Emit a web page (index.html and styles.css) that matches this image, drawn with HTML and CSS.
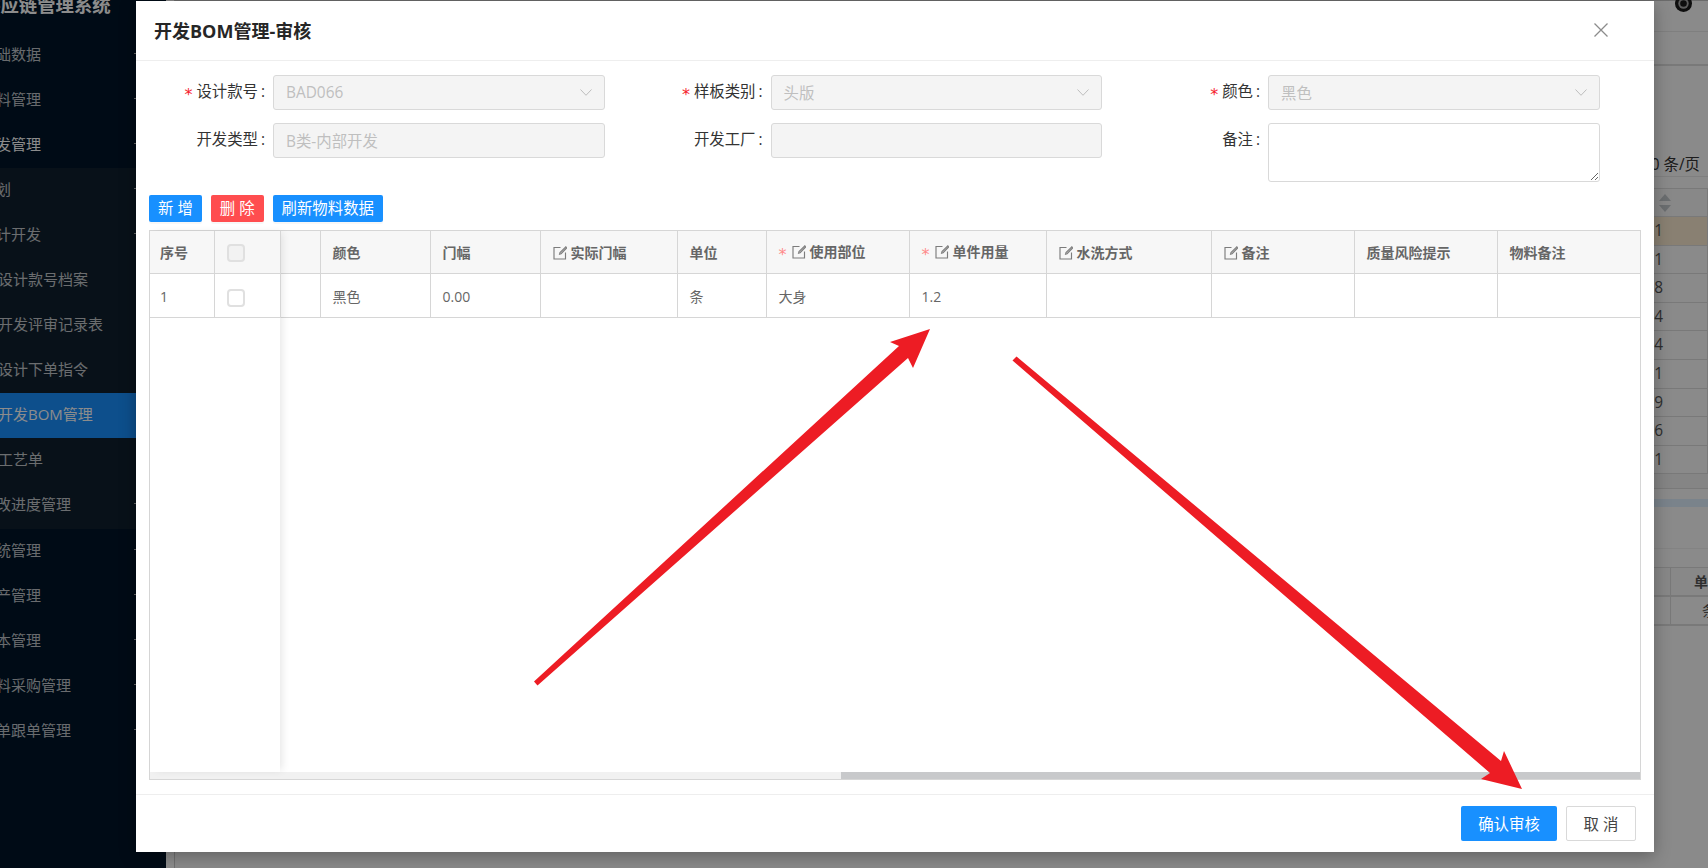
FILE: index.html
```html
<!DOCTYPE html>
<html>
<head>
    <meta charset="utf-8">
    <title>开发BOM管理-审核</title>
    <link rel="stylesheet" href="styles.css">
</head>
<body>
    <svg class="icon-defs" width="0" height="0">
        <symbol id="edit" viewBox="0 0 14 14">
            <path d="M7.5 1.500H1v11.500h11.500V6.500M12.800.8L7 6.600l-.4 1.500 1.500-.4L13.600 2z" fill="none" stroke="#7c7c7c" stroke-width="1.150"/>
        </symbol>
        <symbol id="chevron" viewBox="0 0 12 7">
            <path d="M.5.5L6 6.300 11.500.5" stroke="#bdbdbd" fill="none"/>
        </symbol>
    </svg>

    <div class="page">
        <aside class="sidebar">
            <div class="logo">供应链管理系统</div>
            <div class="menu-item"><span class="lv1">基础数据</span><i class="caret"></i></div>
            <div class="menu-item"><span class="lv1">物料管理</span><i class="caret"></i></div>
            <div class="menu-item open"><span class="lv1">开发管理</span><i class="caret"></i></div>
            <div class="submenu">
                <div class="menu-item"><span class="lv1">企划</span><i class="caret"></i></div>
                <div class="menu-item"><span class="lv1">设计开发</span><i class="caret"></i></div>
                <div class="menu-item"><span class="lv2">设计款号档案</span></div>
                <div class="menu-item"><span class="lv2">开发评审记录表</span></div>
                <div class="menu-item"><span class="lv2">设计下单指令</span></div>
                <div class="menu-item active"><span class="lv2">开发BOM管理</span></div>
                <div class="menu-item"><span class="lv2">工艺单</span></div>
                <div class="menu-item"><span class="lv1">修改进度管理</span><i class="caret"></i></div>
            </div>
            <div class="menu-item"><span class="lv1">系统管理</span><i class="caret"></i></div>
            <div class="menu-item"><span class="lv1">生产管理</span><i class="caret"></i></div>
            <div class="menu-item"><span class="lv1">成本管理</span><i class="caret"></i></div>
            <div class="menu-item"><span class="lv1">面料采购管理</span><i class="caret"></i></div>
            <div class="menu-item"><span class="lv1">订单跟单管理</span><i class="caret"></i></div>
        </aside>
        <main class="main">
            <div class="topbar">
                <svg class="user-icon" width="17" height="17" viewBox="0 0 18 18">
                    <circle cx="9" cy="9" r="9" fill="#1a1a1a"/>
                    <circle cx="9" cy="9" r="5.500" fill="#aaa"/>
                    <circle cx="9" cy="9" r="3.500" fill="#1a1a1a"/>
                </svg>
            </div>
            <div class="tabs"></div>
            <div class="pager">10 条/页</div>
            <div class="list">
                <div class="list-head"><span class="sort"><i class="up"></i><i class="down"></i></span></div>
                <div class="list-row current">2101</div>
                <div class="list-row">2101</div>
                <div class="list-row">2108</div>
                <div class="list-row">2104</div>
                <div class="list-row">2104</div>
                <div class="list-row">2101</div>
                <div class="list-row">2119</div>
                <div class="list-row">2106</div>
                <div class="list-row">2101</div>
            </div>
            <div class="list-foot"></div>
            <div class="blue-band"></div>
            <div class="sub-title"></div>
            <div class="sub-table">
                <div class="sub-row sub-head"><span>单位</span></div>
                <div class="sub-row"><span>条</span></div>
            </div>
        </main>
    </div>

    <div class="mask"></div>

    <div class="modal">
        <div class="modal-header">
            <span class="modal-title">开发BOM管理-审核</span>
            <svg class="modal-close" width="14" height="14" viewBox="0 0 14 14">
                <path d="M.5.5l13 13M13.500.5l-13 13" stroke="#8c8c8c" stroke-width="1.300" fill="none"/>
            </svg>
        </div>

        <div class="modal-body">
            <form class="form-grid">
                <div class="form-item">
                    <label class="form-label"><em>*</em>设计款号</label>
                    <div class="select-box">BAD066 <svg width="12" height="7"><use href="#chevron"/></svg></div>
                </div>
                <div class="form-item">
                    <label class="form-label"><em>*</em>样板类别</label>
                    <div class="select-box">头版 <svg width="12" height="7"><use href="#chevron"/></svg></div>
                </div>
                <div class="form-item">
                    <label class="form-label"><em>*</em>颜色</label>
                    <div class="select-box">黑色 <svg width="12" height="7"><use href="#chevron"/></svg></div>
                </div>
                <div class="form-item">
                    <label class="form-label">开发类型</label>
                    <div class="select-box">B类-内部开发</div>
                </div>
                <div class="form-item">
                    <label class="form-label">开发工厂</label>
                    <div class="select-box"></div>
                </div>
                <div class="form-item">
                    <label class="form-label">备注</label>
                    <textarea class="note-input"></textarea>
                </div>
            </form>

            <div class="toolbar">
                <button type="button" class="btn btn-primary">新 增</button>
                <button type="button" class="btn btn-danger">删 除</button>
                <button type="button" class="btn btn-primary">刷新物料数据</button>
            </div>

            <div class="table-wrap">
                <div class="table-body">
                    <table class="data-table">
                        <colgroup>
                            <col class="w-blank"><col class="w-110"><col class="w-110"><col class="w-137"><col class="w-89">
                            <col class="w-143"><col class="w-137"><col class="w-165"><col class="w-143"><col class="w-143"><col class="w-143">
                        </colgroup>
                        <thead>
                            <tr>
                                <th></th>
                                <th>颜色</th>
                                <th>门幅</th>
                                <th><svg class="edit-icon"><use href="#edit"/></svg>实际门幅</th>
                                <th>单位</th>
                                <th><em>*</em><svg class="edit-icon"><use href="#edit"/></svg>使用部位</th>
                                <th><em>*</em><svg class="edit-icon"><use href="#edit"/></svg>单件用量</th>
                                <th><svg class="edit-icon"><use href="#edit"/></svg>水洗方式</th>
                                <th><svg class="edit-icon"><use href="#edit"/></svg>备注</th>
                                <th>质量风险提示</th>
                                <th>物料备注</th>
                            </tr>
                        </thead>
                        <tbody>
                            <tr>
                                <td></td>
                                <td>黑色</td>
                                <td>0.00</td>
                                <td></td>
                                <td>条</td>
                                <td>大身</td>
                                <td>1.2</td>
                                <td></td>
                                <td></td>
                                <td></td>
                                <td></td>
                            </tr>
                        </tbody>
                    </table>
                    <div class="frozen">
                        <table class="data-table frozen-table">
                            <colgroup><col class="w-64"><col class="w-66"></colgroup>
                            <thead><tr><th>序号</th><th><span class="check head-check"></span></th></tr></thead>
                            <tbody><tr><td>1</td><td><span class="check"></span></td></tr></tbody>
                        </table>
                    </div>
                </div>
                <div class="scrollbar"><div class="scroll-thumb"></div></div>
            </div>
        </div>

        <div class="modal-footer">
            <button type="button" class="btn-large btn-primary">确认审核</button>
            <button type="button" class="btn-large btn-plain">取 消</button>
        </div>
    </div>

    <svg class="arrows" width="1708" height="868" viewBox="0 0 1708 868">
        <polygon points="534,681.5 899,346 890,342 930,329 913,368 908,358 537.5,685.500" fill="#ed1c24"/>
        <polygon points="1016.5,356.500 1501,761 1504,751 1522,789 1481,779 1490,773 1012.500,360.500" fill="#ed1c24"/>
    </svg>
</body>
</html>
```

FILE: styles.css
```css
* {
    box-sizing: border-box;
}

html, body {
    margin: 0;
    height: 100%;
    overflow: hidden;
}

body {
    font-family: "Open Sans", "Noto Sans CJK SC", sans-serif;
    font-size: 15.4px;
    color: #333;
}

.icon-defs {
    position: absolute;
}

.page {
    display: flex;
    height: 868px;
}

/* sidebar */
.sidebar {
    width: 166px;
    flex-shrink: 0;
    overflow: hidden;
    background-color: #001529;
    color: rgba(255, 255, 255, 0.75);
    font-size: 15px;
}

.logo {
    height: 32.5px;
    margin-left: -18px;
    font-size: 18.4px;
    font-weight: 700;
    line-height: 9px;
    white-space: nowrap;
    color: #fff;
}

.menu-item {
    display: flex;
    align-items: center;
    justify-content: space-between;
    height: 45.1px;
    padding: 0 30px 4px 0;
    white-space: nowrap;
}

.menu-item.open {
    color: #fff;
}

.menu-item.active {
    background-color: #1890ff;
    color: #fff;
}

.submenu {
    background-color: #0f1f2f;
}

.lv1 {
    margin-left: -19px;
}

.lv2 {
    margin-left: -2px;
}

.caret {
    width: 2px;
    height: 1px;
    background-color: #bbb;
}

/* page behind the dialog */
.main {
    flex: 1;
    min-width: 0;
    margin-left: 8px;
    border-left: 1px solid #ccc;
    border-top: 1px solid #c4c4c4;
    background-color: #fbfbfb;
}

.topbar {
    display: flex;
    justify-content: flex-end;
    height: 31px;
    padding-right: 16px;
    border-bottom: 1px solid #e8e8e8;
}

.user-icon {
    margin-top: -6px;
}

.tabs {
    height: 34px;
    border-bottom: 2px solid #ddd;
}

.pager {
    height: 111px;
    padding: 88px 8px 0 0;
    border-bottom: 1px solid #e8e8e8;
    text-align: right;
    line-height: 22px;
    white-space: nowrap;
}

.list {
    margin-top: 11px;
    border-top: 1px solid #ddd;
    border-right: 1px solid #ddd;
}

.list-head {
    display: flex;
    justify-content: flex-end;
    height: 28px;
    padding-right: 36px;
    background-color: #f7f7f7;
    border-bottom: 1px solid #ddd;
}

.sort {
    display: flex;
    flex-direction: column;
    gap: 4px;
    padding-top: 5px;
}

.sort i {
    width: 0;
    height: 0;
    border-left: 6px solid transparent;
    border-right: 6px solid transparent;
}

.sort .up {
    border-bottom: 7px solid #c4c8cc;
}

.sort .down {
    border-top: 7px solid #c4c8cc;
}

.list-row {
    height: 28.6px;
    padding-right: 44px;
    border-bottom: 1px solid #ddd;
    text-align: right;
    line-height: 27px;
    color: #555;
}

.list-row.current {
    background-color: #f9ead0;
}

.list-foot {
    height: 15px;
    background-color: #f2f2f2;
    border-bottom: 1px solid #ddd;
}

.blue-band {
    height: 8px;
    margin-top: 10px;
    background-color: #dfeefe;
}

.sub-title {
    height: 42px;
    border-bottom: 1px solid #eee;
}

.sub-table {
    margin-top: 18px;
    border-top: 1px solid #ddd;
}

.sub-row {
    height: 29px;
    padding-left: 1495px;
    border-bottom: 2px solid #ddd;
    font-size: 14px;
    line-height: 27px;
    white-space: nowrap;
    overflow: hidden;
    color: #555;
}

.sub-row span {
    display: block;
    padding-left: 23px;
    border-left: 1px solid #ddd;
}

.sub-head {
    font-weight: 700;
    background-color: #f7f7f7;
}

.sub-head + .sub-row span {
    padding-left: 31px;
}

/* overlay */
.mask {
    position: absolute;
    top: 0;
    left: 0;
    right: 0;
    bottom: 0;
    background-color: rgba(0, 0, 0, 0.45);
}

.arrows {
    position: absolute;
    top: 0;
    left: 0;
    pointer-events: none;
}

/* dialog */
.modal {
    position: absolute;
    top: 1px;
    left: 136px;
    display: flex;
    flex-direction: column;
    width: 1518px;
    height: 851px;
    background-color: #fff;
    box-shadow: 0 4px 16px rgba(0, 0, 0, 0.3);
}

.modal-header {
    display: flex;
    align-items: center;
    justify-content: space-between;
    height: 60px;
    padding: 0 46px 2px 18px;
    border-bottom: 1px solid #eee;
}

.modal-title {
    font-size: 18px;
    font-weight: 700;
    color: #262626;
}

.modal-body {
    flex: 1;
    padding: 14px 13px 0;
}

.form-grid {
    display: grid;
    grid-template-columns: repeat(3, 456.5px);
    column-gap: 41px;
    row-gap: 13px;
    margin-left: -1px;
}

.form-item {
    display: flex;
    align-items: flex-start;
}

.form-label {
    flex: 0 0 125px;
    height: 35px;
    padding-right: 8px;
    text-align: right;
    line-height: 34px;
    color: #333;
}

.form-label::after {
    content: ":";
    margin-left: 3px;
}

.form-label em,
.data-table th em {
    display: inline-block;
    height: 14px;
    font-family: "DejaVu Sans", sans-serif;
    font-size: 16px;
    font-style: normal;
    font-weight: 400;
    line-height: 14px;
    vertical-align: -3px;
}

.form-label em {
    margin-right: 4px;
    color: #f5222d;
}

.select-box {
    display: flex;
    flex: 1;
    align-items: center;
    justify-content: space-between;
    height: 35px;
    padding: 0 12px 1px;
    border: 1px solid #d9d9d9;
    border-radius: 3px;
    background-color: #f4f4f4;
    color: #bfbfbf;
}

.note-input {
    flex: 1;
    height: 59px;
    border: 1px solid #d9d9d9;
    border-radius: 3px;
    resize: vertical;
}

.toolbar {
    display: flex;
    gap: 9px;
    height: 27px;
    margin-top: 13px;
}

.btn {
    height: 27px;
    padding: 0 9px;
    border: 0;
    border-radius: 2px;
    font-family: inherit;
    font-size: 15.4px;
    line-height: 25px;
    color: #fff;
    box-shadow: 0 2px 0 rgba(0, 0, 0, 0.03);
}

.btn-primary {
    background-color: #1890ff;
    color: #fff;
}

.btn-danger {
    background-color: #ff4d4f;
}

/* material table */
.table-wrap {
    display: flex;
    flex-direction: column;
    height: 550px;
    margin-top: 8px;
    border: 1px solid #d6d6d6;
}

.table-body {
    position: relative;
    flex: 1;
}

.data-table {
    width: 100%;
    table-layout: fixed;
    border-collapse: collapse;
    font-size: 14px;
    color: #666;
}

.w-blank { width: 170px; }
.w-110 { width: 110px; }
.w-137 { width: 137px; }
.w-89 { width: 89px; }
.w-143 { width: 143px; }
.w-165 { width: 165px; }
.w-64 { width: 64px; }
.w-66 { width: 66px; }

.data-table th,
.data-table td {
    padding: 0 0 0 12px;
    border-right: 1px solid #d6d6d6;
    border-bottom: 1px solid #d6d6d6;
    text-align: left;
    white-space: nowrap;
}

.data-table th {
    height: 42px;
    background-color: #f7f7f7;
    font-weight: 700;
}

.data-table td {
    height: 44px;
    padding-top: 2px;
}

.data-table tr > :last-child {
    border-right: 0;
}

.data-table th em {
    margin-right: 5px;
    color: #ff8a8a;
}

.edit-icon {
    width: 14px;
    height: 14px;
    margin-right: 4px;
    vertical-align: -2px;
}

.frozen {
    position: absolute;
    top: 0;
    left: 0;
    bottom: 0;
    width: 130px;
    background-color: #fff;
    box-shadow: 4px 0 8px -2px rgba(0, 0, 0, 0.1);
}

.frozen-table {
    width: 130px;
}

.frozen-table th,
.frozen-table td {
    padding-left: 10px;
}

.frozen-table tr > :last-child {
    border-right: 1px solid #d6d6d6;
}

.check {
    display: block;
    width: 18px;
    height: 18px;
    margin: 3px 0 0 2px;
    border: 2px solid #e0e0e0;
    border-radius: 4px;
    background-color: #fff;
}

.head-check {
    background-color: #f2f2f2;
}

.scrollbar {
    display: flex;
    justify-content: flex-end;
    height: 7px;
    background-color: #f1f1f1;
}

.scroll-thumb {
    width: 799px;
    background-color: #c8c9cb;
}

.modal-footer {
    display: flex;
    justify-content: flex-end;
    gap: 9px;
    height: 58px;
    padding: 11px 18px 0 0;
    border-top: 1px solid #eee;
}

.btn-large {
    height: 35px;
    border: 1px solid transparent;
    border-radius: 2px;
    font-family: inherit;
    font-size: 15.4px;
}

.btn-primary.btn-large {
    width: 96px;
}

.btn-plain {
    width: 70px;
    border-color: #d9d9d9;
    background-color: #fff;
    color: #444;
}
```
